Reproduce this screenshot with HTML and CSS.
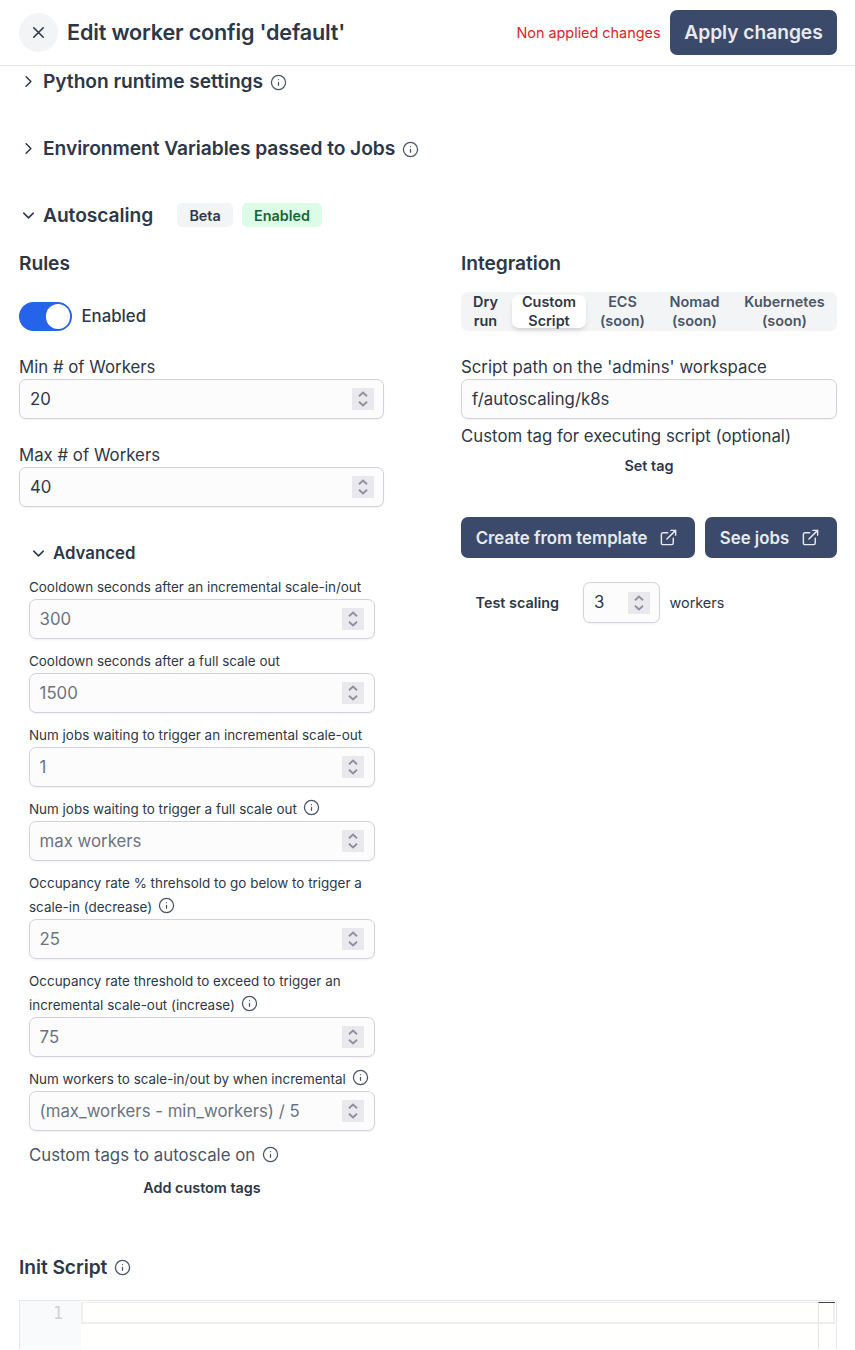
FILE: index.html
```html
<!DOCTYPE html>
<html lang="en">
<head>
<meta charset="utf-8">
<title>Edit worker config</title>
<link rel="stylesheet" href="styles.css">
</head>
<body>
<svg width="0" height="0" class="defs">
  <symbol id="info" viewBox="0 0 24 24"><circle cx="12" cy="12" r="10"/><path d="M12 16v-4M12 8h.01"/></symbol>
  <symbol id="right" viewBox="0 0 24 24"><path d="m9 18 6-6-6-6"/></symbol>
  <symbol id="down" viewBox="0 0 24 24"><path d="m6 9 6 6 6-6"/></symbol>
  <symbol id="close" viewBox="0 0 24 24"><path d="M18 6 6 18M6 6l12 12"/></symbol>
  <symbol id="ext" viewBox="0 0 24 24"><path d="M15 3h6v6M10 14 21 3M18 13v6a2 2 0 0 1-2 2H5a2 2 0 0 1-2-2V8a2 2 0 0 1 2-2h6"/></symbol>
  <symbol id="step" viewBox="0 0 22 22"><path d="M7 8.3 11 4.6l4 3.7M7 13.7l4 3.7 4-3.7"/></symbol>
</svg>
<header class="topbar">
  <button class="close"><svg class="icon i-close"><use href="#close"/></svg></button>
  <h1 class="title">Edit worker config 'default'</h1>
  <span class="warn">Non applied changes</span>
  <button class="btn btn-apply">Apply changes</button>
</header>
<main class="content">
  <div class="section"><svg class="icon i-chev"><use href="#right"/></svg><h2>Python runtime settings</h2><svg class="icon i-info"><use href="#info"/></svg></div>
  <div class="section"><svg class="icon i-chev"><use href="#right"/></svg><h2>Environment Variables passed to Jobs</h2><svg class="icon i-info"><use href="#info"/></svg></div>
  <div class="section section-open"><svg class="icon i-chev"><use href="#down"/></svg><h2>Autoscaling</h2><span class="badge">Beta</span><span class="badge badge-green">Enabled</span></div>
  <div class="columns">
    <section class="rules">
      <h2 class="heading">Rules</h2>
      <div class="toggle-row"><span class="toggle"><span class="knob"></span></span><span class="toggle-label">Enabled</span></div>
      <div class="field"><label class="label">Min # of Workers</label><div class="input"><span>20</span><svg class="step"><use href="#step"/></svg></div></div>
      <div class="field field-max"><label class="label">Max # of Workers</label><div class="input"><span>40</span><svg class="step"><use href="#step"/></svg></div></div>
      <div class="advanced">
        <div class="adv-head"><svg class="icon i-chev"><use href="#down"/></svg><h3>Advanced</h3></div>
        <div class="adv-list">
          <div><label class="small">Cooldown seconds after an incremental scale-in/out</label><div class="input ph"><span>300</span><svg class="step"><use href="#step"/></svg></div></div>
          <div><label class="small">Cooldown seconds after a full scale out</label><div class="input ph"><span>1500</span><svg class="step"><use href="#step"/></svg></div></div>
          <div><label class="small">Num jobs waiting to trigger an incremental scale-out</label><div class="input ph"><span>1</span><svg class="step"><use href="#step"/></svg></div></div>
          <div><label class="small">Num jobs waiting to trigger a full scale out<svg class="icon i-info"><use href="#info"/></svg></label><div class="input ph"><span>max workers</span><svg class="step"><use href="#step"/></svg></div></div>
          <div><label class="small">Occupancy rate % threhsold to go below to trigger a<br>scale-in (decrease)<svg class="icon i-info"><use href="#info"/></svg></label><div class="input ph"><span>25</span><svg class="step"><use href="#step"/></svg></div></div>
          <div><label class="small">Occupancy rate threshold to exceed to trigger an<br>incremental scale-out (increase)<svg class="icon i-info"><use href="#info"/></svg></label><div class="input ph"><span>75</span><svg class="step"><use href="#step"/></svg></div></div>
          <div><label class="small">Num workers to scale-in/out by when incremental<svg class="icon i-info"><use href="#info"/></svg></label><div class="input ph"><span>(max_workers - min_workers) / 5</span><svg class="step"><use href="#step"/></svg></div></div>
        </div>
        <div class="tags-row"><span>Custom tags to autoscale on</span><svg class="icon i-info"><use href="#info"/></svg></div>
        <button class="link-btn">Add custom tags</button>
      </div>
    </section>
    <section class="integration">
      <h2 class="heading">Integration</h2>
      <div class="tabs">
        <span class="tab tab-dry dark">Dry<br>run</span><span class="tab tab-on dark">Custom<br>Script</span><span class="tab tab-ecs">ECS<br>(soon)</span><span class="tab tab-nomad">Nomad<br>(soon)</span><span class="tab tab-k8s">Kubernetes<br>(soon)</span>
      </div>
      <label class="label">Script path on the 'admins' workspace</label>
      <div class="input"><span>f/autoscaling/k8s</span></div>
      <label class="label label-tag">Custom tag for executing script (optional)</label>
      <button class="link-btn set-tag">Set tag</button>
      <div class="actions">
        <button class="btn btn-create"><span>Create from template</span><svg class="icon i-ext"><use href="#ext"/></svg></button>
        <button class="btn btn-jobs"><span>See jobs</span><svg class="icon i-ext"><use href="#ext"/></svg></button>
      </div>
      <div class="test"><span class="test-label">Test scaling</span><div class="input input-test"><span>3</span><svg class="step"><use href="#step"/></svg></div><span class="workers">workers</span></div>
    </section>
  </div>
  <div class="init"><h2>Init Script</h2><svg class="icon i-info"><use href="#info"/></svg></div>
  <div class="editor">
    <div class="gutter">1</div>
    <div class="code"><div class="line"></div><div class="ruler"></div></div>
  </div>
</main>
</body>
</html>
```
FILE: styles.css
```css
* { box-sizing: border-box; }
body { margin: 0; width: 855px; height: 1350px; overflow: hidden; background: #fff; color: #2d3748; font-family: Inter, sans-serif; font-size: 17.28px; }
h1, h2, h3 { margin: 0; font-weight: 600; white-space: nowrap; }
h2 { font-size: 19.2px; line-height: 28px; letter-spacing: -0.055px; }
button { border: 0; padding: 0; font-family: inherit; color: inherit; background: none; }
.defs { display: block; height: 0; }
.icon { fill: none; stroke: currentColor; stroke-width: 2; stroke-linecap: round; stroke-linejoin: round; flex: none; }
.i-info { width: 17px; height: 17px; color: #4a5568; stroke-width: 1.8; }
.i-chev { width: 19px; height: 19px; stroke-width: 1.9; }
.i-close { width: 19px; height: 19px; }
.i-ext { width: 19px; height: 19px; stroke-width: 1.8; }
.topbar { height: 66px; border-bottom: 1px solid #e5e7eb; display: flex; align-items: center; padding: 0 18px 0 19px; }
.close { width: 39px; height: 39px; border-radius: 50%; background: #f3f4f6; display: flex; align-items: center; justify-content: center; margin-right: 9px; }
.title { font-size: 21.6px; line-height: 30px; padding-bottom: 2px; flex: 1; letter-spacing: -0.17px; }
.warn { color: #dc2626; font-size: 14.4px; margin-right: 9.5px; }
.btn { background: #3b4a6b; color: #e8eaee; border-radius: 7px; font-weight: 600; display: flex; align-items: center; justify-content: center; white-space: nowrap; }
.btn-apply { width: 167px; height: 45px; font-size: 19.2px; padding-bottom: 2px; letter-spacing: -0.03px; }
.content { padding: 1px 18px 0 19px; }
.section { height: 28px; display: flex; align-items: center; margin-bottom: 39px; }
.section .i-chev { margin-right: 5px; }
.section .i-info { margin: 2px 0 0 7px; }
.section-open { margin-bottom: 20px; }
.badge { height: 24px; width: 56px; border-radius: 5px; background: #f3f4f6; font-size: 14.4px; font-weight: 600; display: flex; align-items: center; justify-content: center; margin-left: 24px; }
.badge-green { width: 80px; margin-left: 9px; background: #dcfce7; color: #166534; }
.columns { display: flex; justify-content: space-between; height: 1004px; }
.rules { width: 365px; }
.integration { width: 376px; }
.heading { height: 28px; }
.toggle-row { margin-top: 25px; height: 29px; display: flex; align-items: center; gap: 9.5px; }
.toggle { width: 53px; height: 29px; border-radius: 15px; background: #2563eb; padding: 2px; display: flex; align-items: center; justify-content: flex-end; }
.knob { width: 24.4px; height: 24.4px; border-radius: 50%; background: #fff; }
.toggle-label { font-size: 16.8px; font-weight: 500; padding-bottom: 1px; }
.label { display: block; height: 24px; line-height: 25px; font-size: 16.8px; white-space: nowrap; letter-spacing: 0.01px; }
.field { margin-top: 24px; }
.input { height: 40px; border: 1px solid #d2d2dc; border-radius: 7px; background: #fcfcfd; box-shadow: 0 1px 2px rgba(0,0,0,.06); display: flex; align-items: center; justify-content: space-between; padding: 0 9px 0 10px; font-size: 16.8px; white-space: nowrap; }
.ph { color: #6b7280; padding: 0 10px 0 9.6px; }
.step { width: 22px; height: 22px; background: #e9e9ed; fill: none; stroke: #8f8f9d; stroke-width: 1.9; }
.advanced { margin: 33px 9px 0 10px; }
.adv-head { height: 26px; display: flex; align-items: center; gap: 5px; }
.adv-head h3 { font-size: 16.8px; }
.adv-list { margin-top: 9px; display: grid; gap: 10px; }
.small { display: block; font-size: 13.44px; line-height: 24px; white-space: nowrap; }
.small .i-info { display: inline-block; vertical-align: -2px; margin: -4px 0 0 6.2px; }
.tags-row { margin-top: 12px; height: 24px; display: flex; align-items: center; gap: 7px; font-size: 16.8px; color: #4a5568; white-space: nowrap; }
.tags-row .i-info { margin-top: -2px; }
.link-btn { display: block; width: 100%; height: 24px; margin-top: 8px; font-size: 14.4px; font-weight: 600; text-align: center; }
.tabs { margin: 15px 0 24px; height: 39px; border-radius: 7px; background: #f3f4f6; display: flex; align-items: center; color: #4a5568; font-size: 14.4px; line-height: 19px; font-weight: 600; text-align: center; }
.tab { flex: none; padding-bottom: 2px; }
.dark { color: #2d3748; }
.tab-dry { width: 49px; }
.tab-on { width: 74px; height: 33px; background: #fff; border-radius: 7px; box-shadow: 0 4px 6px -1px rgba(0,0,0,.1), 0 2px 4px -2px rgba(0,0,0,.1); margin-left: 2px; display: flex; align-items: center; justify-content: center; }
.tab-ecs { width: 73px; }
.tab-nomad { width: 71px; }
.tab-k8s { width: 109px; }
.label-tag { margin-top: 5px; }
.set-tag { margin-top: 5px; }
.actions { display: flex; justify-content: space-between; margin-top: 40px; }
.actions .btn { height: 41px; font-size: 16.8px; gap: 12px; padding-right: 2px; }
.actions .btn span { padding-top: 1px; }
.btn-create { width: 234px; }
.btn-jobs { width: 132px; }
.test { display: flex; align-items: center; margin-top: 24px; height: 41px; font-size: 14.4px; }
.test-label { width: 107px; padding: 0 0 0 14.5px; margin-right: 15px; font-weight: 600; white-space: nowrap; }
.input-test { width: 77px; height: 41px; }
.input-test span { padding: 0 0 1px; }
.workers { margin-left: 9.5px; }
.init { height: 28px; display: flex; align-items: center; }
.init .i-info { margin-left: 6.5px; }
.editor { margin-top: 19px; height: 49px; border: 1px solid #e5e7eb; border-bottom: 0; display: flex; }
.gutter { width: 61px; padding-right: 18px; background: #f9fafc; color: #d1d1d1; text-align: right; font: 16.8px/25px "DejaVu Sans Mono", monospace; }
.code { flex: 1; padding: 1px 1px 0 0; position: relative; background: #fffffd; }
.line { height: 22px; border: 2px solid #eee; border-top-width: 1px; }
.ruler { position: absolute; top: 1px; right: 1px; width: 17px; height: 47px; border-left: 1px solid #e5e5e5; border-top: 1px solid #424242; }
```
